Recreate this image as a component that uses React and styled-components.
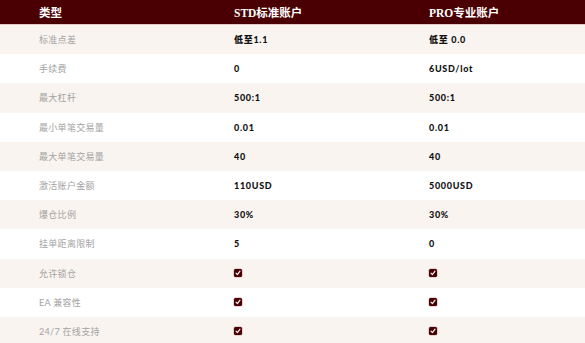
import React from "react";
import styled, { createGlobalStyle } from "styled-components";

const Global = createGlobalStyle`
  html, body { margin: 0; padding: 0; background: #ffffff; }
  body { width: 585px; height: 343px; overflow: hidden; }
`;

const Table = styled.div`
  width: 585px;
  display: flex;
  flex-direction: column;
`;

const HeaderRow = styled.div`
  display: grid;
  grid-template-columns: repeat(3, 195px);
  height: 24px;
  background: #4a0002;
  border-bottom: 1px solid #e6c9c6;
`;

const HeadCell = styled.div`
  display: flex;
  align-items: center;
  padding-left: 39px;
  color: #ffffff;
  font-family: "Liberation Serif", "Noto Sans CJK SC", serif;
  font-weight: 700;
  font-size: 11.5px;
`;

const Row = styled.div`
  display: grid;
  grid-template-columns: repeat(3, 195px);
  height: 29.2px;
  background: ${(p) => (p.$alt ? "#f9f4f0" : "#ffffff")};
`;

const Label = styled.div`
  display: flex;
  align-items: center;
  padding-left: 39px;
  color: #a3a3a3;
  font-family: "Lato", "Noto Sans CJK SC", sans-serif;
  font-size: 9px;
  letter-spacing: 0.3px;
`;

const Value = styled.div`
  display: flex;
  align-items: center;
  padding-left: 39px;
  color: #111111;
  font-family: "Lato", "Noto Sans CJK SC", sans-serif;
  font-weight: 900;
  font-size: 9px;
  letter-spacing: 0.7px;
`;

const Check = styled.span`
  display: inline-flex;
  align-items: center;
  justify-content: center;
  width: 8px;
  height: 8px;
  border-radius: 1.5px;
  background: #4a0002;
  box-shadow: 0 0 0 0.5px #c9a9a9;
`;

const CheckMark = () => (
  <Check>
    <svg width="6" height="6" viewBox="0 0 6 6">
      <path d="M1 3.2 L2.4 4.6 L5 1.2" stroke="#fff" strokeWidth="1.1" fill="none" strokeLinecap="round" strokeLinejoin="round" />
    </svg>
  </Check>
);

const rows = [
  ["标准点差", "低至1.1", "低至 0.0"],
  ["手续费", "0", "6USD/lot"],
  ["最大杠杆", "500:1", "500:1"],
  ["最小单笔交易量", "0.01", "0.01"],
  ["最大单笔交易量", "40", "40"],
  ["激活账户金额", "110USD", "5000USD"],
  ["爆仓比例", "30%", "30%"],
  ["挂单距离限制", "5", "0"],
  ["允许锁仓", true, true],
  ["EA 兼容性", true, true],
  ["24/7 在线支持", true, true],
];

export default function App() {
  return (
    <>
      <Global />
      <Table>
        <HeaderRow>
          <HeadCell>类型</HeadCell>
          <HeadCell>STD标准账户</HeadCell>
          <HeadCell>PRO专业账户</HeadCell>
        </HeaderRow>
        {rows.map(([label, a, b], i) => (
          <Row key={label} $alt={i % 2 === 0}>
            <Label>{label}</Label>
            <Value>{a === true ? <CheckMark /> : a}</Value>
            <Value>{b === true ? <CheckMark /> : b}</Value>
          </Row>
        ))}
      </Table>
    </>
  );
}
